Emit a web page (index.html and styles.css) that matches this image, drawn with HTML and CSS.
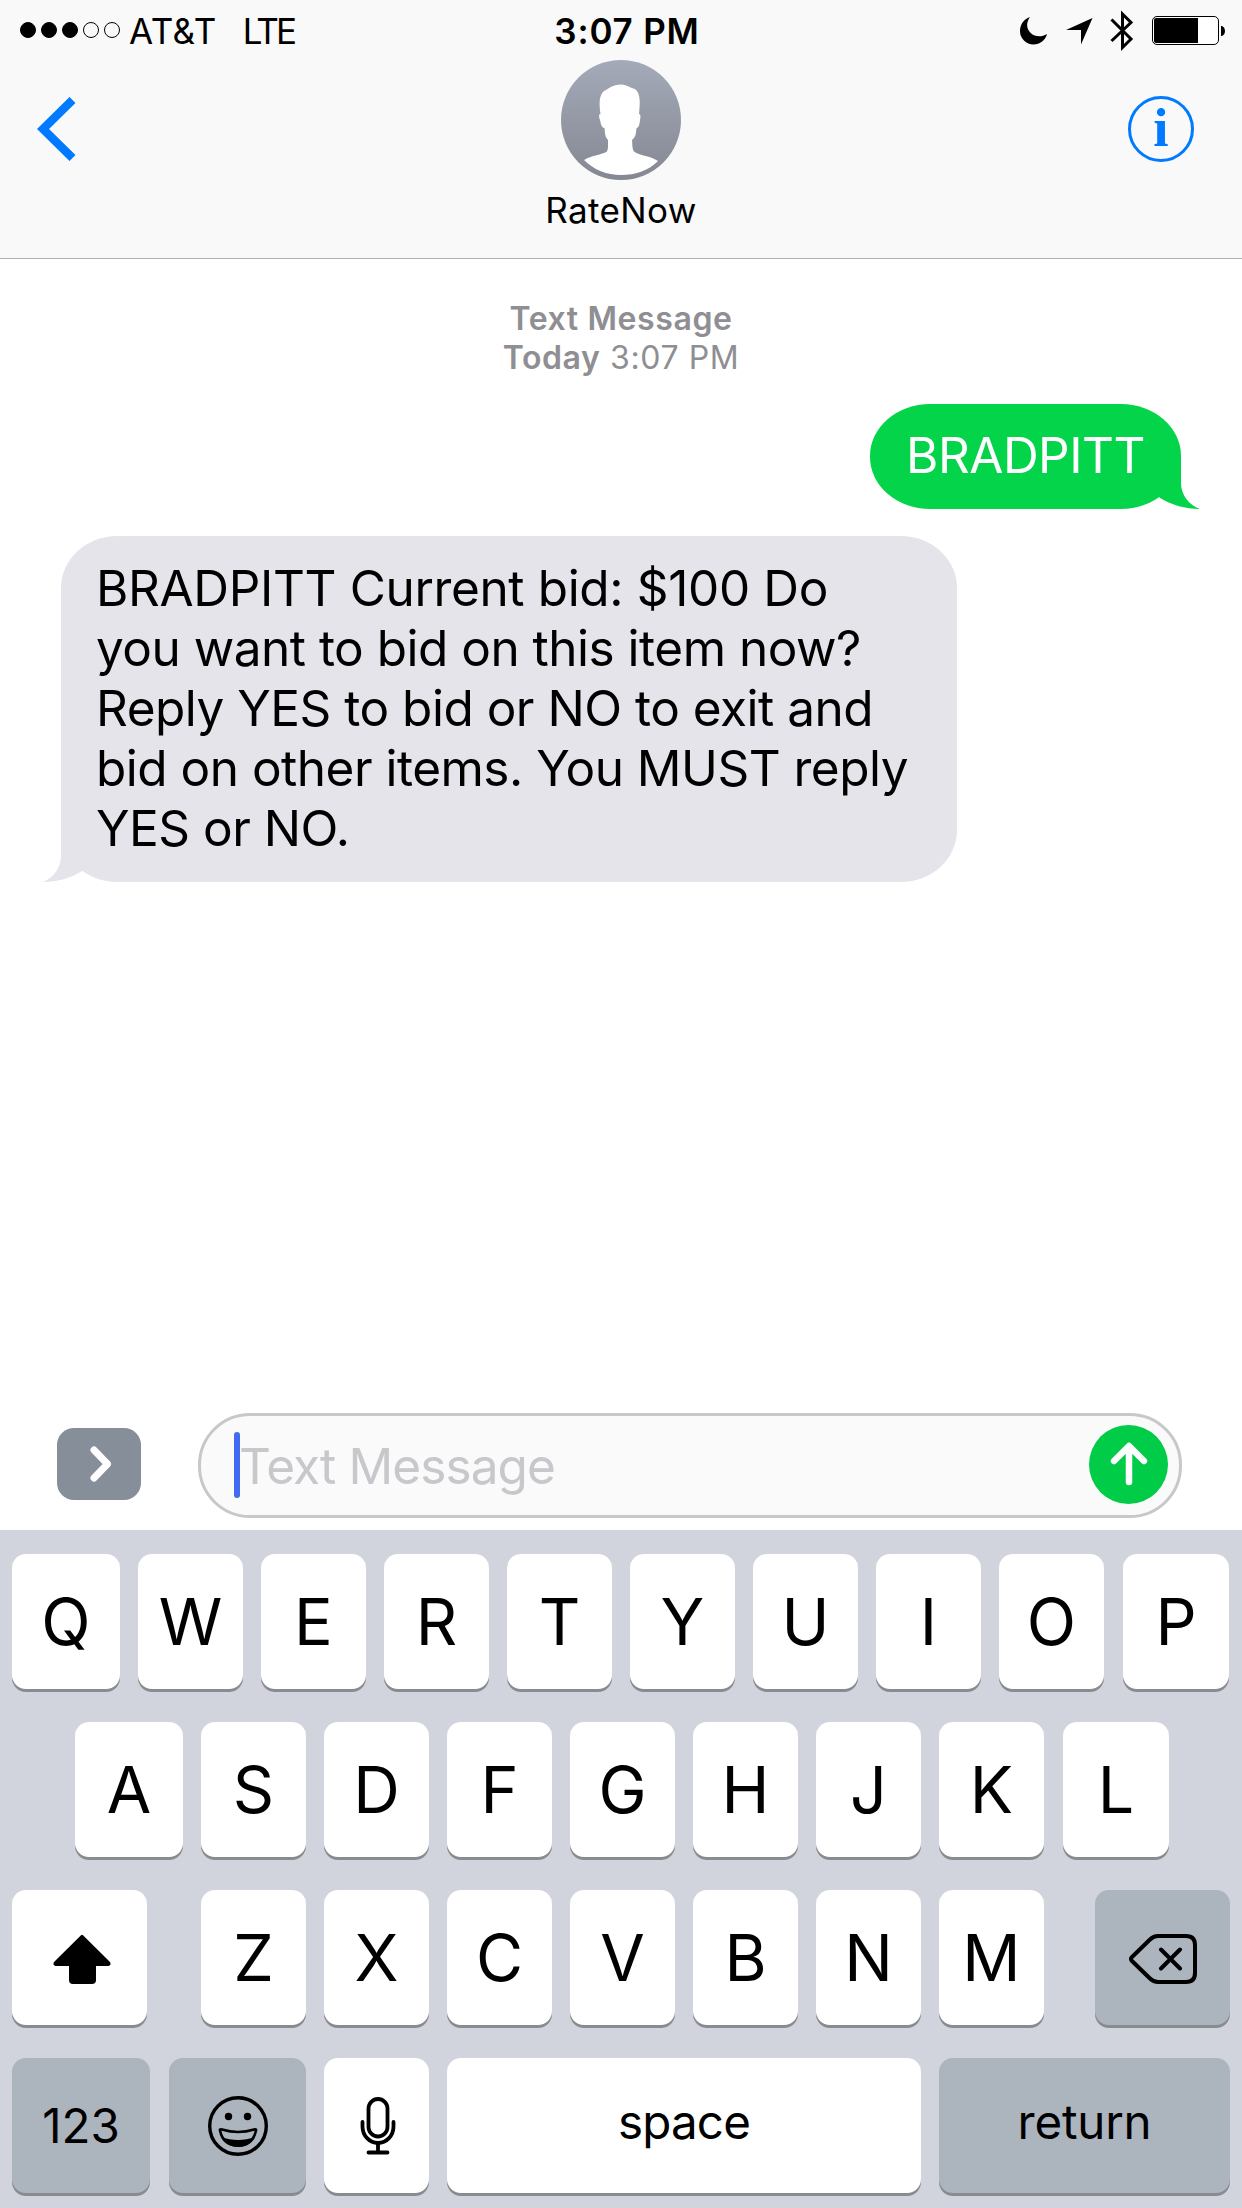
FILE: index.html
```html
<!DOCTYPE html>
<html lang="en">
<head>
  <meta charset="UTF-8">
  <meta name="viewport" content="width=device-width, initial-scale=1.0">
  <title>RateNow</title>
  <link rel="stylesheet" href="styles.css">
</head>
<body>
  <div class="phone">
    <header class="header">
      <div class="status-bar">
        <div class="status-left">
          <div class="signal">
            <span class="dot full"></span>
            <span class="dot full"></span>
            <span class="dot full"></span>
            <span class="dot"></span>
            <span class="dot"></span>
          </div>
          <span class="carrier">AT&amp;T</span>
          <span class="network">LTE</span>
        </div>
        <span class="time">3:07 PM</span>
        <div class="status-right">
          <svg class="moon" width="28" height="28" viewBox="0 0 28 28"><path d="M10 0C3.500 2 0 8 0 14A13.500 13.500 0 0 0 13.500 27.500C20 27.500 25.500 23 27 17C15 24.500 1 12.500 10 0Z"/></svg>
          <svg class="location" width="27" height="27" viewBox="0 0 27 27"><path d="M26.500 0L15 26.500V12H0Z"/></svg>
          <svg class="bluetooth" width="24" height="42" viewBox="0 0 24 42"><path d="M1.500 9.500L21 29L12.500 37.500V4L21 12.500L1.500 31" fill="none" stroke="#000" stroke-width="3"/></svg>
          <svg class="battery" width="74" height="30" viewBox="0 0 74 30"><rect x=".5" y=".5" width="66" height="28" rx="4.500" fill="#fff" stroke="#000"/><path d="M4 2H46V27H4A2 2 0 0 1 2 25V4A2 2 0 0 1 4 2ZM69 10C74.300 10 74.300 20 69 20Z"/></svg>
        </div>
      </div>
      <div class="nav">
        <svg class="back" width="40" height="64" viewBox="0 0 40 64"><path d="M35.500 3L6 32L35.500 61" fill="none" stroke="#007aff" stroke-width="8.500"/></svg>
        <div class="contact">
          <svg class="avatar" width="120" height="120" viewBox="0 0 120 120">
            <defs>
              <linearGradient id="avatarFill" x1="0" y1="0" x2="0" y2="1">
                <stop offset="0" stop-color="#a4aab9"/>
                <stop offset="1" stop-color="#858892"/>
              </linearGradient>
            </defs>
            <circle cx="60" cy="60" r="60" fill="url(#avatarFill)"/>
            <path d="M39.500 54C38 44 38 35 43 31C49 28 51 25 60 24.500C67 25 69 28 74 29C80 34 79 44 78 54C80 54 79.500 58 79 60C78.500 64 78 68 75.500 68C75 73 75 77 71 80C71.500 85 71 88 73 91.500C79 96 87 95 97 101C87 111 74 115 60 115C46 115 33 110 23 100C32 95 40 95 46 91.500C47.500 88 47 85 47 80C44 77 44 73 43.500 68C40.500 68 40 64 39 60C38 57 37.500 54 39.500 54Z" fill="#fff"/>
          </svg>
          <span class="contact-name">RateNow</span>
        </div>
        <span class="info">i</span>
      </div>
    </header>

    <main class="messages">
      <div class="stamp"><b>Text Message</b><br><b>Today</b> 3:07 PM</div>
      <div class="bubble sent">
        <span>BRADPITT</span>
        <svg class="tail" width="60" height="62" viewBox="0 0 60 62"><path d="M41 10V36C41 48 49 58 60 62C45 62 32 58 20 51L7 30V10Z"/></svg>
      </div>
      <div class="bubble received">
        <span class="first-line">BRADPITT Current bid: $100 Do</span><br>
        <span>you want to bid on this item now?</span><br>
        <span>Reply YES to bid or NO to exit and</span><br>
        <span>bid on other items. You MUST reply</span><br>
        <span>YES or NO.</span>
        <svg class="tail" width="60" height="62" viewBox="0 0 60 62"><path d="M18 10V36C18 48 10 58 0 62C15 62 28 58 39 51L53 30V10Z"/></svg>
      </div>
    </main>

    <div class="compose">
      <div class="expand">
        <svg width="24" height="38" viewBox="0 0 24 38"><path d="M5 5L18.500 19L5 33" fill="none" stroke="#fff" stroke-width="7" stroke-linecap="round" stroke-linejoin="round"/></svg>
      </div>
      <div class="field">
        <span class="caret"></span>
        <span class="placeholder">Text Message</span>
        <div class="send">
          <svg width="38" height="46" viewBox="0 0 38 46"><path d="M19 41V6M4 20L19 5L34 20" fill="none" stroke="#fff" stroke-width="6.500" stroke-linecap="round" stroke-linejoin="round"/></svg>
        </div>
      </div>
    </div>

    <div class="keyboard">
      <div class="row">
        <div class="key edge">Q</div>
        <div class="key">W</div>
        <div class="key">E</div>
        <div class="key">R</div>
        <div class="key">T</div>
        <div class="key">Y</div>
        <div class="key">U</div>
        <div class="key">I</div>
        <div class="key">O</div>
        <div class="key last">P</div>
      </div>
      <div class="row middle">
        <div class="key edge">A</div>
        <div class="key">S</div>
        <div class="key">D</div>
        <div class="key">F</div>
        <div class="key">G</div>
        <div class="key">H</div>
        <div class="key">J</div>
        <div class="key">K</div>
        <div class="key last">L</div>
      </div>
      <div class="row">
        <div class="key shift">
          <svg width="58" height="50" viewBox="0 0 58 50"><path d="M28 1.200Q29 .2 30 1.200L56.500 27.500C58.500 29.500 57.500 32 55 32H43V46Q43 50 39 50H20Q16 50 16 46V32H3C.5 32-.5 29.500 1.500 27.500Z"/></svg>
        </div>
        <div class="key">Z</div>
        <div class="key">X</div>
        <div class="key">C</div>
        <div class="key">V</div>
        <div class="key">B</div>
        <div class="key">N</div>
        <div class="key">M</div>
        <div class="key delete">
          <svg width="68" height="50" viewBox="0 0 68 50" fill="none" stroke="#000" stroke-width="4" stroke-linecap="round" stroke-linejoin="round"><path d="M2.500 23.500L21 5.500Q24.500 2 29 2H57Q66 2 66 11V39Q66 48 57 48H29Q24.500 48 21 44.500L2.500 26.500Q1.500 25 2.500 23.500ZM32 15.500L51 34.500M51 15.500L32 34.500"/></svg>
        </div>
      </div>
      <div class="row">
        <div class="key numbers">123</div>
        <div class="key emoji">
          <svg width="60" height="60" viewBox="0 0 60 60"><circle cx="30" cy="30" r="28.300" fill="none" stroke="#000" stroke-width="3.400"/><circle cx="20.500" cy="20.500" r="3.700"/><circle cx="39.500" cy="20.500" r="3.700"/><path d="M12 34.500C11.500 33.500 12.500 33 14 33.500C25 37 35 37 46 33.500C47.500 33 48.500 33.500 48 34.500C46 44 40 49.500 30 49.500C20 49.500 14 44 12 34.500Z" fill="none" stroke="#000" stroke-width="2.600"/><path d="M13 41C24 45 36 45 47 41C43 47 38 51 30 51C22 51 17 47 13 41Z"/></svg>
        </div>
        <div class="key mic">
          <svg width="36" height="58" viewBox="0 0 36 58" fill="none" stroke="#000" stroke-width="3.800" stroke-linecap="round"><rect x="8.500" y="2" width="19" height="37.500" rx="9.500"/><path d="M2.500 25V29.500A15.500 16.500 0 0 0 33.500 29.500V25M18 46V55M8.500 55.500H27.500"/></svg>
        </div>
        <div class="key space">space</div>
        <div class="key return">return</div>
      </div>
    </div>
  </div>
</body>
</html>
```
FILE: styles.css
```css
* {
  box-sizing: border-box;
}
body {
  margin: 0;
  font-family: Inter, "Liberation Sans", sans-serif;
  background: #fff;
  color: #000;
}
svg {
  display: block;
  flex: none;
}
.phone {
  width: 1242px;
  height: 2208px;
  display: flex;
  flex-direction: column;
  overflow: hidden;
}
.header {
  height: 259px;
  background: #f9f9f9;
  border-bottom: 1px solid #b2b2b2;
}
.status-bar {
  display: grid;
  grid-template-columns: 1fr auto 1fr;
  align-items: center;
  height: 60px;
  padding: 2px 16px 0 20px;
  font-size: 35px;
  line-height: 40px;
}
.status-left, .status-right, .signal {
  display: flex;
  align-items: center;
}
.signal {
  gap: 5px;
  margin: -2px 9px 0 0;
}
.dot {
  width: 16px;
  height: 16px;
  border: 1px solid #000;
  border-radius: 50%;
}
.dot.full {
  background: #000;
}
.carrier {
  letter-spacing: 0.5px;
}
.network {
  margin-left: 26px;
  letter-spacing: -2.9px;
}
.time {
  margin-left: 8px;
  font-weight: 600;
  letter-spacing: 0.8px;
}
.status-right {
  justify-content: flex-end;
}
.location {
  margin-left: 18px;
}
.bluetooth {
  margin-left: 17px;
}
.battery {
  margin-left: 18px;
}
.nav {
  display: flex;
  justify-content: space-between;
  padding: 0 48px 0 37px;
}
.back {
  margin-top: 37px;
}
.contact {
  display: flex;
  flex-direction: column;
  align-items: center;
  width: 200px;
  margin-left: 37px;
}
.contact-name {
  margin-top: 9px;
  font-size: 35px;
  line-height: 42px;
  letter-spacing: 0.4px;
}
.info {
  width: 66px;
  height: 66px;
  margin-top: 36px;
  border: 3px solid #007aff;
  border-radius: 50%;
  color: #007aff;
  font: bold 55px/57px "Liberation Serif", serif;
  text-align: center;
}
.messages {
  flex: 1;
  display: flex;
  flex-direction: column;
  padding: 40px 61px 0;
  font-size: 49.5px;
  line-height: 60px;
}
.stamp {
  color: #8e8e93;
  font-size: 32px;
  line-height: 39px;
  letter-spacing: 0.6px;
  text-align: center;
}
.stamp b {
  font-weight: 600;
}
.bubble {
  position: relative;
  letter-spacing: -0.5px;
  white-space: nowrap;
}
.sent {
  align-self: flex-end;
  width: 311px;
  height: 105px;
  margin-top: 27px;
  padding: 21px 0 0 36px;
  background: #04d449;
  border-radius: 60px / 52px;
  color: #fff;
}
.received {
  width: 896px;
  height: 346px;
  margin-top: 27px;
  padding: 22px 0 0 35px;
  background: #e5e4ea;
  border-radius: 56px / 52px;
}
.first-line {
  letter-spacing: -0.35px;
}
.tail {
  position: absolute;
  bottom: 0;
}
.sent .tail {
  right: -19px;
  fill: #04d449;
}
.received .tail {
  left: -18px;
  fill: #e5e4ea;
}
.compose {
  display: flex;
  align-items: center;
  gap: 57px;
  height: 129px;
  padding: 0 60px 0 57px;
}
.expand {
  display: flex;
  align-items: center;
  justify-content: center;
  width: 84px;
  height: 72px;
  margin-bottom: 3px;
  padding-left: 3px;
  border-radius: 17px;
  background: #858e99;
}
.field {
  flex: 1;
  display: flex;
  align-items: center;
  height: 105px;
  padding: 0 11px 0 33px;
  border: 3px solid #c7c7cc;
  border-radius: 52px;
  background: #fafafa;
}
.caret {
  width: 6px;
  height: 66px;
  margin-bottom: 1px;
  border-radius: 3px;
  background: #426bf2;
}
.placeholder {
  flex: 1;
  margin-left: -1px;
  color: #c7c7cc;
  font-size: 49.5px;
  letter-spacing: -0.9px;
}
.send {
  display: flex;
  align-items: center;
  justify-content: center;
  width: 79px;
  height: 79px;
  margin-bottom: 3px;
  border-radius: 50%;
  background: #00cc47;
}
.keyboard {
  height: 678px;
  padding: 24px 12px 0;
  background: #d1d4dc;
}
.row {
  display: flex;
  gap: 18px;
  margin-bottom: 33px;
}
.row.middle {
  padding-left: 63px;
}
.key {
  display: flex;
  align-items: center;
  justify-content: center;
  width: 105px;
  height: 135px;
  border-radius: 14px;
  background: #fff;
  box-shadow: 0 3px 0 #898b8f;
  font-size: 64.5px;
}
.edge {
  width: 108px;
}
.last {
  width: 106px;
  margin-left: 1px;
}
.shift, .delete {
  width: 135px;
}
.shift {
  margin-right: 36px;
  padding: 2px 0 0 4px;
}
.delete {
  margin-left: 33px;
  padding-top: 2px;
}
.numbers, .emoji, .delete, .return {
  background: #acb4be;
}
.numbers, .emoji {
  width: 138px;
}
.numbers, .space, .return {
  font-size: 47.5px;
}
.emoji {
  width: 137px;
  margin-left: 1px;
}
.mic {
  padding-left: 2px;
}
.space {
  width: 474px;
  padding-bottom: 8px;
  letter-spacing: -0.8px;
}
.return {
  width: 291px;
  padding-bottom: 8px;
  letter-spacing: -0.2px;
}
```
